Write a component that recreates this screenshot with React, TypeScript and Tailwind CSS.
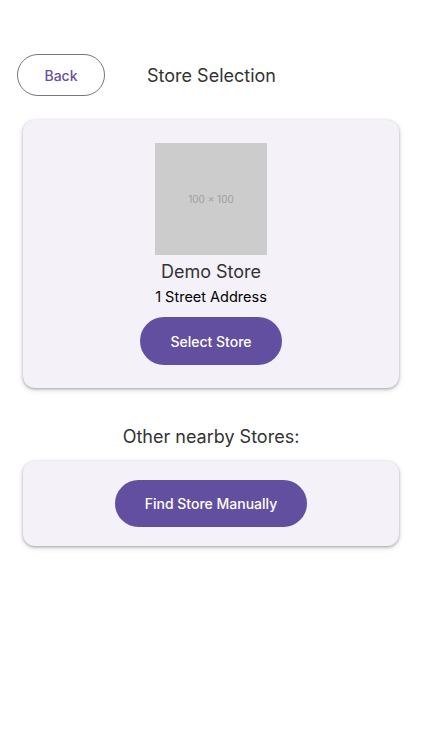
import React from "react";

const App = () => {
  return (
    <div className="min-h-[750px] w-full bg-white pt-[54px] font-['Inter',sans-serif]">
      {/* Header */}
      <div className="flex items-center pl-[17px]">
        <button className="h-[42px] w-[88px] rounded-full border border-[#79747e] text-[14px] font-medium text-[#6750a4]">
          Back
        </button>
        <h1 className="ml-[42px] text-[18px] text-[#333333]">Store Selection</h1>
      </div>

      {/* Current store */}
      <div className="mx-[23px] mt-[24px] flex flex-col items-center rounded-[12px] bg-[#f4f1f8] pt-[23px] pb-[23px] shadow-[0_1px_3px_rgba(0,0,0,0.3),0_2px_6px_rgba(0,0,0,0.12)]">
        <div className="flex h-[112px] w-[112px] items-center justify-center bg-[#cccccc] text-[10px] text-[#a0a0a0]">
          100 x 100
        </div>
        <p className="mt-[5px] text-[18px] leading-[24px] text-[#333333]">Demo Store</p>
        <p className="mt-[3px] text-[14.5px] leading-[20px] text-black">1 Street Address</p>
        <button className="mt-[10px] h-[48px] w-[142px] rounded-full bg-[#634fa0] text-[14px] font-medium text-white">
          Select Store
        </button>
      </div>

      <p className="mt-[37px] text-center text-[18px] leading-[24px] text-[#333333]">Other nearby Stores:</p>

      {/* Other stores */}
      <div className="mx-[23px] mt-[12px] flex flex-col items-center rounded-[12px] bg-[#f4f1f8] py-[19px] shadow-[0_1px_3px_rgba(0,0,0,0.3),0_2px_6px_rgba(0,0,0,0.12)]">
        <button className="h-[47px] w-[192px] rounded-full bg-[#634fa0] text-[14px] font-medium text-white">
          Find Store Manually
        </button>
      </div>
    </div>
  );
};

export default App;
